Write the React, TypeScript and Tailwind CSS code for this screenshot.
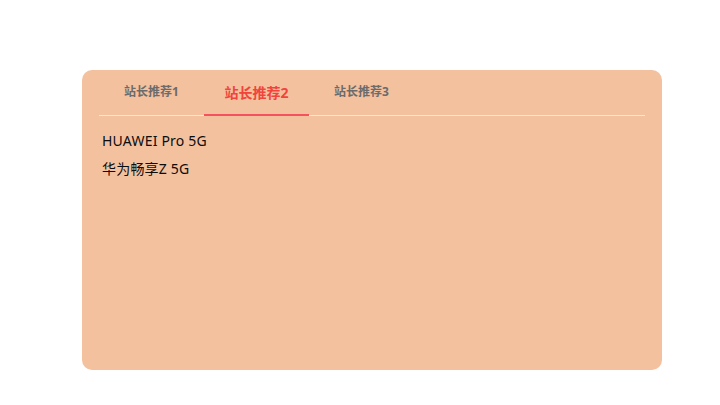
import { useState } from "react";

const tabs = [
  { label: "站长推荐1", items: ["HUAWEI Mate 60", "华为nova 12"] },
  { label: "站长推荐2", items: ["HUAWEI Pro 5G", "华为畅享Z 5G"] },
  { label: "站长推荐3", items: ["HUAWEI P60", "华为Mate X5"] },
];

const App = () => {
  const [active, setActive] = useState(1);

  return (
    <div
      className="w-[720px] h-[405px] bg-white overflow-hidden"
      style={{ fontFamily: '"Noto Sans", "Noto Sans CJK SC", sans-serif' }}
    >
      <div className="pt-[70px] pl-[82px]">
        <div className="w-[580px] h-[300px] rounded-[10px] bg-[#f4c19f] px-[17px]">
          {/* tab bar */}
          <div className="flex h-[46px] border-b border-[#fbe6d6]">
            {tabs.map((tab, i) => (
              <button
                key={tab.label}
                onClick={() => setActive(i)}
                className={
                  i === active
                    ? "relative w-[105px] pb-[1px] text-[14px] font-bold text-[#f0443c]"
                    : "relative w-[105px] pb-[1px] text-[12px] font-bold text-[#6b6b6b]"
                }
              >
                {tab.label}
                {i === active && (
                  <span className="absolute left-0 right-0 bottom-[-1px] h-[2px] bg-[#f5515f]" />
                )}
              </button>
            ))}
          </div>
          {/* list */}
          <ul className="pt-[11px] pl-[3px] text-[14px] tracking-[0.2px] text-[#0d0d0d] leading-[28px]">
            {tabs[active].items.map((item) => (
              <li key={item}>{item}</li>
            ))}
          </ul>
        </div>
      </div>
    </div>
  );
};

export default App;
